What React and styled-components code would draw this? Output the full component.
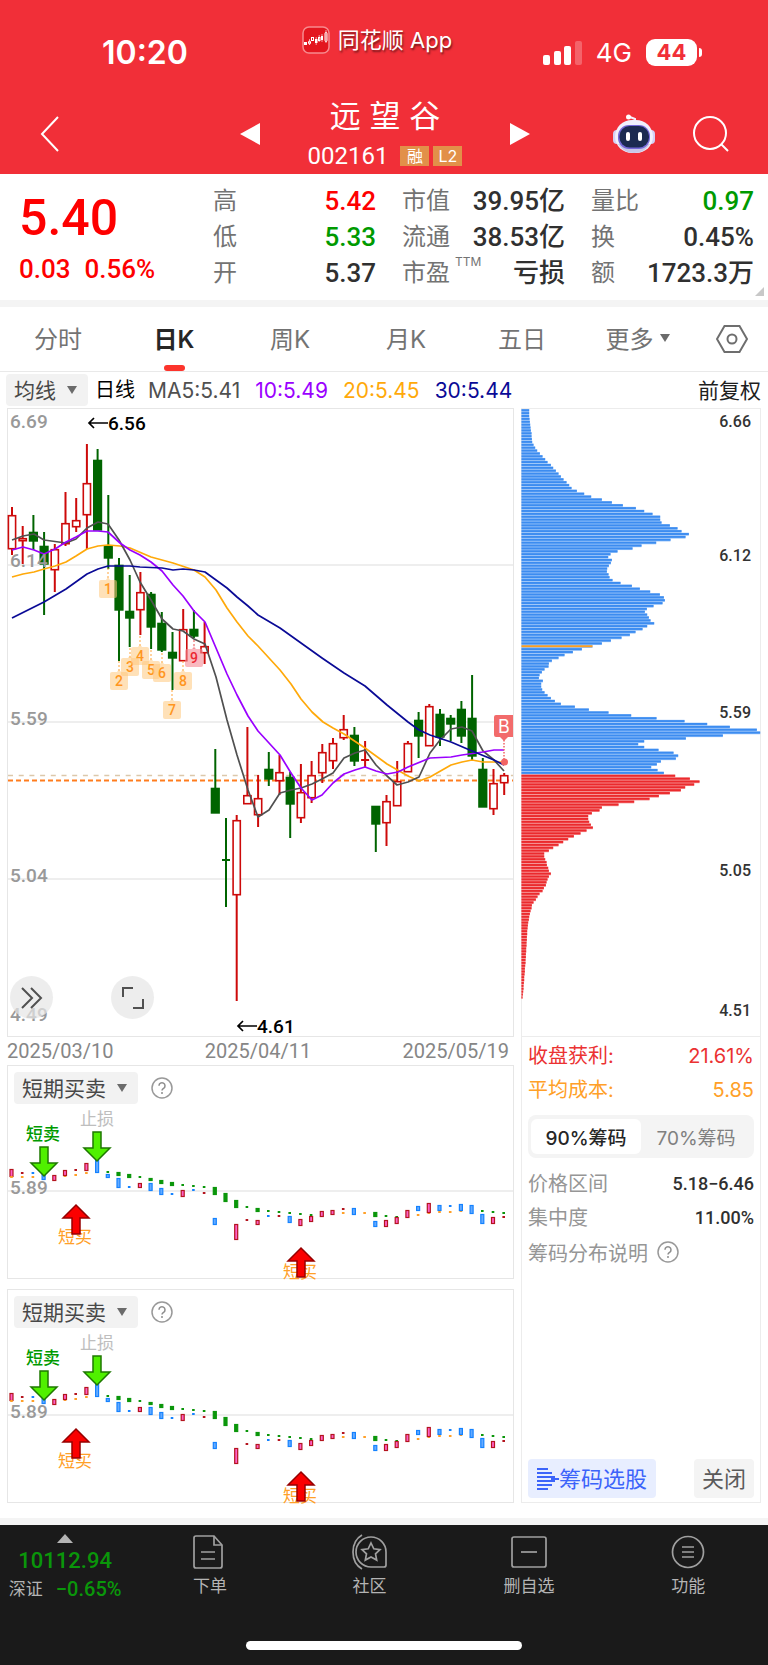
import React from "react";
import styled, { createGlobalStyle } from "styled-components";

const STEP = 10.7;

// kind, high, body top, body bottom, low
const candles = [
	["up", 507, 515, 549, 555],
	["up", 526, 538, 541, 564],
	["down", 515, 532, 541, 550],
	["down", 532, 546, 564, 615],
	["up", 544, 549, 570, 592],
	["up", 492, 523, 544, 546],
	["up", 498, 520, 527, 532],
	["up", 444, 483, 515, 549],
	["down", 449, 460, 530, 530],
	["down", 495, 546, 558, 569],
	["down", 558, 565, 610, 661],
	["down", 575, 611, 618, 647],
	["up", 572, 592, 610, 635],
	["down", 592, 594, 627, 649],
	["down", 612, 623, 650, 652],
	["down", 632, 652, 658, 690],
	["up", 609, 629, 661, 661],
	["down", 610, 629, 636, 638],
	["up", 622, 646, 653, 664],
	["down", 749, 788, 813, 813],
	["down", 818, 860, 861, 907],
	["up", 815, 820, 895, 1001],
	["up", 727, 795, 804, 804],
	["up", 775, 798, 815, 827],
	["down", 752, 769, 779, 786],
	["up", 755, 772, 781, 795],
	["down", 772, 777, 804, 838],
	["up", 764, 792, 818, 823],
	["up", 761, 775, 798, 803],
	["up", 744, 752, 773, 783],
	["up", 738, 743, 761, 769],
	["up", 715, 729, 738, 740],
	["down", 727, 735, 761, 766],
	["up", 741, 760, 761, 767],
	["down", 806, 806, 824, 852],
	["up", 795, 801, 823, 846],
	["up", 761, 781, 806, 806],
	["up", 741, 743, 772, 772],
	["down", 712, 720, 736, 758],
	["up", 704, 706, 746, 746],
	["down", 709, 714, 737, 746],
	["down", 715, 718, 724, 741],
	["down", 701, 709, 736, 743],
	["down", 675, 718, 756, 760],
	["down", 758, 769, 807, 807],
	["up", 769, 783, 809, 815],
	["up", 773, 775, 783, 795],
];

const averages = [
	{
		color: "#ffa90a",
		points:
			"12,577 23,574 34,572 44,569 55,566 66,562 76,556 87,549 98,546 108,545 120,546 130,548 151,557 173,563 194,570 205,577 216,590 227,608 237,622 248,636 258,646 269,658 280,670 291,684 301,699 312,712 323,722 333,728 344,734 365,748 387,764 408,776 419,781 430,777 451,765 462,762 472,760 483,762 504,762",
	},
	{
		color: "#505050",
		points:
			"12,540 23,536 34,534 44,540 66,543 76,539 87,528 98,522 108,524 119,540 130,560 140,582 151,600 162,619 173,629 183,631 194,639 205,644 216,677 227,720 237,755 248,790 258,817 269,810 280,793 291,790 301,788 312,784 322,779 333,773 344,758 355,753 365,750 376,765 387,776 397,785 408,782 419,777 430,753 440,740 451,729 462,727 472,731 483,751 494,760 504,771",
	},
	{
		color: "#9a00ff",
		points:
			"12,550 23,547 34,550 44,554 55,549 66,542 76,537 87,531 98,531 108,532 120,543 130,550 140,555 151,562 162,571 173,585 183,596 194,611 205,622 216,648 227,674 237,695 248,716 258,731 269,743 280,755 291,773 301,788 312,800 322,795 333,783 344,774 355,770 365,767 376,771 387,774 398,772 408,767 430,758 451,757 462,755 483,752 494,750 504,750",
	},
	{
		color: "#0a0a96",
		points:
			"12,618 44,602 66,589 87,574 98,569 108,566 130,566 140,567 162,568 173,570 183,569 194,570 205,572 216,580 227,588 237,597 248,606 258,615 280,628 301,643 322,658 344,673 365,686 387,705 408,722 419,730 430,735 451,742 472,751 494,760 504,765",
	},
];

// number, x, top of the flag, start of the dotted stem
const flags = [
	[1, 108, 580, 568],
	[2, 119, 672, 661],
	[3, 130, 658, 648],
	[4, 140, 647, 636],
	[5, 151, 661, 650],
	[6, 162, 664, 653],
	[7, 172, 701, 690],
	[8, 183, 672, 661],
	[9, 194, 649, 640],
];

const priceLabels = [
	["6.69", 428],
	["6.14", 567],
	["5.59", 725],
	["5.04", 882],
	["4.49", 1021],
];

const chipLabels = [
	["6.66", 427],
	["6.12", 561],
	["5.59", 718],
	["5.05", 876],
	["4.51", 1016],
];

const chips = [
	43, 43, 43, 44, 45, 46, 47, 48, 50, 50, 51, 52, 56, 61, 67, 75, 83, 91, 98,
	108, 115, 123, 131, 138, 146, 155, 163, 170, 186, 208, 229, 261, 291, 324,
	363, 388, 413, 436, 436, 440, 465, 488, 500, 522, 512, 467, 424, 380, 353,
	308, 287, 280, 291, 288, 282, 277, 276, 281, 284, 293, 317, 351, 375, 406,
	435, 447, 450, 443, 416, 396, 390, 397, 402, 407, 418, 397, 383, 362, 345,
	320, 288, 261, 233, 201, 174, 149, 131, 111, 102, 101, 89, 81, 74, 72, 84,
	79, 79, 82, 89, 98, 108, 120, 138, 180, 222, 281, 349, 425, 509, 577, 645,
	726, 736, 624, 513, 388, 370, 388, 431, 476, 490, 483, 438, 426, 409, 428,
	447, 481, 525, 554, 538, 511, 498, 465, 432, 404, 358, 311, 261, 254, 231,
	220, 220, 223, 228, 234, 215, 197, 177, 160, 145, 131, 115, 102, 88, 88, 91,
	95, 96, 100, 102, 108, 102, 98, 95, 93, 87, 83, 74, 68, 63, 56, 51, 50, 47,
	45, 43, 42, 40, 39, 38, 37, 37, 36, 36, 35, 35, 34, 34, 33, 33, 32, 32, 31,
	30, 30, 29, 28, 28, 27, 26, 26, 25, 24, 23,
];
const COST_ROW = 82;
const FIRST_PROFIT_ROW = 127;

// r/b/g are bars, o is the small orange mark; an entry without a bottom is a dot
const signals = [
	[["r", 1169, 1177], ["o", 1177]],
	[["r", 1173], ["o", 1177]],
	[["b", 1173], ["o", 1177]],
	[["b", 1174, 1180]],
	[["r", 1175, 1181]],
	[["o", 1176], ["r", 1170, 1176]],
	[["r", 1170], ["o", 1175]],
	[["r", 1163, 1171], ["o", 1173]],
	[["b", 1160, 1173]],
	[["g", 1172], ["b", 1174, 1178]],
	[["g", 1172, 1176], ["b", 1178, 1188]],
	[["g", 1174, 1178], ["b", 1187]],
	[["g", 1177], ["r", 1183, 1188]],
	[["g", 1178, 1181], ["b", 1183, 1191]],
	[["g", 1180, 1184], ["b", 1188, 1195]],
	[["g", 1182, 1186], ["b", 1194]],
	[["g", 1185], ["r", 1190, 1197]],
	[["g", 1186], ["b", 1190]],
	[["g", 1187], ["r", 1193]],
	[["g", 1187, 1195], ["b", 1218, 1225]],
	[["g", 1193, 1202]],
	[["g", 1200, 1208], ["r", 1224, 1240]],
	[["g", 1207], ["r", 1220]],
	[["g", 1208, 1212], ["r", 1220, 1225]],
	[["g", 1211], ["b", 1216]],
	[["g", 1212], ["r", 1216]],
	[["g", 1213], ["b", 1216, 1223]],
	[["g", 1214], ["r", 1219, 1226]],
	[["g", 1215], ["r", 1216, 1222]],
	[["r", 1211, 1217]],
	[["r", 1210, 1215]],
	[["r", 1209], ["o", 1213]],
	[["b", 1208, 1215]],
	[["o", 1213]],
	[["g", 1212, 1217], ["b", 1221, 1227]],
	[["g", 1216], ["r", 1220, 1227]],
	[["g", 1217], ["r", 1217, 1224]],
	[["r", 1210, 1218]],
	[["b", 1206, 1211], ["o", 1215]],
	[["o", 1213], ["r", 1203, 1213]],
	[["b", 1205, 1211], ["o", 1212]],
	[["b", 1206], ["o", 1212]],
	[["o", 1211], ["b", 1204, 1211]],
	[["b", 1205, 1214]],
	[["g", 1211], ["b", 1214, 1224]],
	[["g", 1212], ["r", 1217, 1224]],
	[["g", 1213], ["r", 1217]],
];

const signalColors = {
	r: ["#b4141e", "#ff5fc8"],
	b: ["#1482ff", "#64aaff"],
	g: ["#0a960a", "#0a960a"],
	o: ["#ffa028", "#ffa028"],
};

const quotes = [
	[
		["高", "5.42", "#fe0000"],
		["低", "5.33", "#009a00"],
		["开", "5.37"],
	],
	[
		["市值", "39.95亿"],
		["流通", "38.53亿"],
		["市盈", "亏损", undefined, "TTM"],
	],
	[
		["量比", "0.97", "#009a00"],
		["换", "0.45%"],
		["额", "1723.3万"],
	],
];

const Caret = () => (
	<svg width="12" height="10" viewBox="0 0 12 10" aria-hidden="true">
		<path d="M1 1h10L6 9z" fill="#6b6b6b" />
	</svg>
);

const HelpIcon = () => (
	<svg width="22" height="22" viewBox="0 0 22 22" fill="none" aria-hidden="true">
		<circle cx="11" cy="11" r="10" stroke="#999" strokeWidth="1.5" />
		<path
			d="M8 8.8a3 3 0 1 1 4.6 2.5c-1.1.7-1.6 1.1-1.6 2.2"
			stroke="#8c8c8c"
			strokeWidth="1.5"
		/>
		<circle cx="11" cy="16" r="1" fill="#8c8c8c" />
	</svg>
);

const StatusBar = () => (
	<Status>
		<Clock>10:20</Clock>
		<AppMark>
			<svg width="28" height="28" viewBox="0 0 28 28" aria-hidden="true">
				<rect x="1" y="1" width="26" height="26" rx="6" fill="#e3161f" stroke="#f78a8e" strokeWidth="1.5" />
				<g fill="#fff">
					<rect x="2" y="16" width="3" height="3" />
					<rect x="13" y="13" width="2.5" height="4" />
					<rect x="19" y="10" width="2" height="4" />
				</g>
				<g fill="none" stroke="#fff">
					<rect x="6.5" y="15" width="2" height="3" rx="1" />
					<rect x="9.5" y="11.5" width="2" height="3" />
					<rect x="16.5" y="11.5" width="1.5" height="3" />
					<rect x="23" y="6.5" width="2" height="9" rx="1" />
					<path d="M7.5 13v6M14.2 11v8M17.2 9v7M20 8v8M24 4v13" strokeWidth=".6" />
				</g>
			</svg>
			同花顺 App
		</AppMark>
		<Signals>
			<svg width="39" height="25" viewBox="0 0 39 25" fill="#fff" aria-hidden="true">
				<rect x="0" y="15" width="7" height="10" rx="2" />
				<rect x="11" y="11" width="7" height="14" rx="2" />
				<rect x="21" y="6" width="7" height="19" rx="2" />
				<rect x="32" y="1" width="7" height="24" rx="2" opacity=".25" />
			</svg>
			<Network>4G</Network>
			<Battery>44</Battery>
		</Signals>
	</Status>
);

const StockHeader = () => (
	<Nav>
		<IconButton aria-label="返回">
			<svg width="20" height="36" viewBox="0 0 20 36" fill="none" stroke="#fff" strokeWidth="2">
				<path d="M18 1L2 18l16 17" />
			</svg>
		</IconButton>
		<Stock>
			<IconButton aria-label="上一只">
				<svg width="20" height="22" viewBox="0 0 20 22" fill="#fff">
					<path d="M20 0v22L0 11z" />
				</svg>
			</IconButton>
			<StockTitle>
				<StockName>远 望 谷</StockName>
				<StockCode>
					002161
					<Tags>
						<Tag>融</Tag>
						<Tag>L2</Tag>
					</Tags>
				</StockCode>
			</StockTitle>
			<IconButton aria-label="下一只">
				<svg width="20" height="22" viewBox="0 0 20 22" fill="#fff">
					<path d="M0 0v22l20-11z" />
				</svg>
			</IconButton>
		</Stock>
		<Tools>
			<IconButton aria-label="智能助手">
				<svg width="44" height="40" viewBox="0 0 44 40">
					<path d="M23 8V5l-5-2" fill="none" stroke="#f4f0ff" strokeWidth="2" />
					<circle cx="16.5" cy="3" r="2.5" fill="#fff" />
					<rect x="1" y="16" width="8" height="14" rx="4" fill="#d4d0f5" />
					<rect x="35" y="16" width="8" height="14" rx="4" fill="#d4d0f5" />
					<rect x="3" y="6" width="38" height="33" rx="17" fill="#f1f0fc" />
					<path d="M6 30c4 6 9 9 16 9s12-3 16-9z" fill="#c9c7e8" />
					<rect x="6" y="11" width="32" height="24" rx="11" fill="#7568d8" />
					<rect x="7.5" y="12" width="29.5" height="21.5" rx="10" fill="#1c2a50" />
					<rect x="14" y="18" width="4" height="9" rx="2" fill="#fff" />
					<rect x="26" y="18" width="4" height="9" rx="2" fill="#fff" />
				</svg>
			</IconButton>
			<IconButton aria-label="搜索">
				<svg width="38" height="38" viewBox="0 0 38 38" fill="none" stroke="#fff" strokeWidth="2">
					<circle cx="18" cy="18" r="16" />
					<path d="M29 29l7 7" />
				</svg>
			</IconButton>
		</Tools>
	</Nav>
);

const QuotePanel = () => (
	<Quote>
		<Latest>
			<LastPrice>5.40</LastPrice>
			<Change>
				<span>0.03</span>
				<span>0.56%</span>
			</Change>
		</Latest>
		{quotes.map((rows) => (
			<QuoteList key={rows[0][0]}>
				{rows.map(([label, value, color, note]) => (
					<QuoteRow key={label}>
						<QuoteLabel>
							{label}
							{note && <sup>{note}</sup>}
						</QuoteLabel>
						<QuoteValue $color={color}>{value}</QuoteValue>
					</QuoteRow>
				))}
			</QuoteList>
		))}
		<Corner />
	</Quote>
);

const Candle = ({ index, data }) => {
	const [kind, high, top, bottom, low] = data;
	const x = 12 + index * STEP;
	const color = kind === "up" ? "#cd0a0a" : "#006400";

	if (bottom - top < 2) {
		return (
			<path
				d={`M${x} ${high}V${low}M${x - 4} ${top}h8`}
				stroke={color}
				strokeWidth="2"
			/>
		);
	}
	return (
		<g stroke={color} strokeWidth="2">
			<path d={`M${x} ${high}V${top}M${x} ${bottom}V${low}`} />
			<rect
				x={x - 3.6}
				y={top + 0.7}
				width="7.2"
				height={bottom - top - 1}
				fill={kind === "up" ? "#fff" : color}
				strokeWidth={kind === "up" ? 1.6 : 2}
			/>
		</g>
	);
};

const KLineChart = () => (
	<Drawing viewBox="8 409 505 627" role="img" aria-label="日K线图">
		<path d="M8 565h505M8 722h505M8 879h505" stroke="#e9e9e9" strokeWidth="1.5" />
		<path d="M8 775.5h505" stroke="#dcc8aa" strokeWidth="1.5" strokeDasharray="5 5.7" />
		<path d="M8 780.5h505" stroke="#ff7d1e" strokeWidth="2" strokeDasharray="5 3" />
		{candles.map((c, i) => (
			<Candle key={i} index={i} data={c} />
		))}
		{averages.map((line) => (
			<polyline
				key={line.color}
				points={line.points}
				fill="none"
				stroke={line.color}
				strokeWidth="1.7"
				strokeLinejoin="round"
			/>
		))}
		{flags.map(([n, x, y, from]) => {
			const hot = n === 9;
			return (
				<g key={n}>
					<path d={`M${x} ${from}V${y}`} stroke={hot ? "#e64646" : "#ffa53c"} strokeDasharray="2 2" />
					<path
						d={`M${x - 7} ${y}h5l2-3 2 3h5q2 0 2 2v14q0 2-2 2h-14q-2 0-2-2v-14q0-2 2-2z`}
						fill={hot ? "#f58a94" : "#ffc87d"}
						opacity={hot ? 0.6 : 0.55}
					/>
					<FlagText x={x} y={y + 14} $hot={hot}>
						{n}
					</FlagText>
				</g>
			);
		})}
		<path d="M504 740v20" stroke="#f26464" strokeWidth="1.5" strokeDasharray="1.5 1.5" />
		<circle cx="504.5" cy="762" r="3.5" fill="#f26464" />
		<path d="M496 715h17v22h-5l-4 4-4-4h-4q-2 0-2-2v-18q0-2 2-2z" fill="#f26b6b" />
		<BuyText x="504" y="733">B</BuyText>
		{priceLabels.map(([text, y]) => (
			<AxisText key={text} x="10" y={y}>
				{text}
			</AxisText>
		))}
		<g fill="none" stroke="#000" strokeWidth="1.7">
			<path d="M108 423H89M94 418l-5 5 5 5" />
			<path d="M257 1026h-19M243 1021l-5 5 5 5" />
		</g>
		<ExtremeText x="108" y="430">6.56</ExtremeText>
		<ExtremeText x="257" y="1033">4.61</ExtremeText>
	</Drawing>
);

const ChipChart = () => (
	<Drawing viewBox="522 409 238 627" role="img" aria-label="筹码分布">
		{chips.map((v, i) => {
			const y = 409 + i * 2.878;
			const profit = i >= FIRST_PROFIT_ROW;
			const width = (v - 20) / 3;
			let color = profit ? "#eb2a2d" : "#3c8cf0";
			if (i === COST_ROW) color = "#ff9f1e";
			return (
				<g key={i}>
					<rect x="521.5" y={y} width={width} height="2.9" fill={profit ? "#f48284" : "#8cbcf8"} />
					<rect x="521.5" y={y + 0.3} width={width} height="1.9" fill={color} />
				</g>
			);
		})}
		{chipLabels.map(([text, y]) => (
			<ChipText key={text} x="751" y={y}>
				{text}
			</ChipText>
		))}
	</Drawing>
);

const Arrow = ({ x, y, up }) => (
	<path
		d={
			up
				? `M${x} ${y}l13 13h-9v16h-8v-16h-9z`
				: `M${x} ${y + 29}l13-13h-9v-16h-8v16h-9z`
		}
		fill={up ? "#fa0000" : "#50f000"}
		stroke={up ? "#960000" : "#1e7800"}
		strokeWidth="1.5"
	/>
);

const SignalPanel = ({ id }) => (
	<Panel>
		<SignalBar>
			<Picker>
				<select id={id} aria-label="指标">
					<option>短期买卖</option>
				</select>
				<Caret />
			</Picker>
			<IconButton aria-label="指标说明">
				<HelpIcon />
			</IconButton>
		</SignalBar>
		<Drawing viewBox="8 1104 505 174" role="img" aria-label="短期买卖信号">
			<path d="M8 1191h505" stroke="#e9e9e9" strokeWidth="1.5" />
			{signals.map((marks, i) =>
				marks.map(([kind, top, bottom]) => {
					const x = 11.5 + i * STEP;
					const [edge, fill] = signalColors[kind];
					if (!bottom) {
						return <rect key={kind} x={x - 1.3} y={top - 1} width="2.6" height="2" fill={edge} />;
					}
					return (
						<rect
							key={kind}
							x={x - 1.5}
							y={top + 0.5}
							width="3"
							height={bottom - top - 1}
							fill={fill}
							stroke={edge}
							strokeWidth="1.2"
						/>
					);
				})
			)}
			<AxisText x="10" y="1194">5.89</AxisText>
			<SignalText x="43" y="1140" $color="#009a00" $bold>短卖</SignalText>
			<SignalText x="97" y="1125" $color="#bebebe">止损</SignalText>
			<SignalText x="75" y="1243" $color="#ffa028">短买</SignalText>
			<SignalText x="300" y="1278" $color="#ffa028">短买</SignalText>
			<Arrow x={44} y={1147} />
			<Arrow x={97} y={1132} />
			<Arrow x={76} y={1205} up />
			<Arrow x={301} y={1248} up />
		</Drawing>
	</Panel>
);

const ChipPanel = () => (
	<SidePanel>
		<ChipArea>
			<ChipChart />
		</ChipArea>
		<Facts>
			<Fact $color="#eb3232">
				收盘获利:<span>21.61%</span>
			</Fact>
			<Fact $color="#ffa028">
				平均成本:<span>5.85</span>
			</Fact>
		</Facts>
		<Segment>
			<SegmentButton $active aria-pressed="true">90%筹码</SegmentButton>
			<SegmentButton aria-pressed="false">70%筹码</SegmentButton>
		</Segment>
		<Facts>
			<Fact>
				价格区间<b>5.18−6.46</b>
			</Fact>
			<Fact>
				集中度<b>11.00%</b>
			</Fact>
			<Explain>
				筹码分布说明
				<HelpIcon />
			</Explain>
		</Facts>
		<SideFooter>
			<PickButton>
				<svg width="22" height="22" viewBox="0 0 22 22" stroke="#3c64fa" strokeWidth="2" aria-hidden="true">
					<path d="M0 1h11M0 5h15M0 9h18M0 13h18M0 17h15M0 21h11M14 11h8" />
				</svg>
				筹码选股
			</PickButton>
			<CloseButton>关闭</CloseButton>
		</SideFooter>
	</SidePanel>
);

const menu = [
	{
		label: "下单",
		icon: (
			<>
				<path d="M4 2h18l8 9v21q0 2-2 2H4q-2 0-2-2V4q0-2 2-2z" />
				<path d="M22 2v9h8M9 18h14M9 25h14" />
			</>
		),
	},
	{
		label: "社区",
		icon: (
			<>
				<path d="M20 3a15 15 0 1 0 0 30h13a2 2 0 0 0 2-2V18A15 15 0 0 0 20 3z" />
				<path d="M11 1C-1 8-1 28 11 35" />
				<path d="M20 9l2.8 5.8 6.2.8-4.5 4.3 1.2 6.2L20 23l-5.7 3.1 1.2-6.2-4.5-4.3 6.2-.8z" />
			</>
		),
	},
	{
		label: "删自选",
		icon: (
			<>
				<rect x="1" y="3" width="34" height="30" rx="2" />
				<path d="M10 18h16" />
			</>
		),
	},
	{
		label: "功能",
		icon: (
			<>
				<circle cx="18" cy="18" r="15.5" />
				<path d="M12 13h12M12 18h12M12 23h12" />
			</>
		),
	},
];

const App = () => {
	return (
		<Page>
			<GlobalStyle />
			<Header>
				<StatusBar />
				<StockHeader />
			</Header>
			<QuotePanel />
			<Divider />
			<Tabs>
				<Tab>分时</Tab>
				<Tab $active>日K</Tab>
				<Tab>周K</Tab>
				<Tab>月K</Tab>
				<Tab>五日</Tab>
				<Tab>
					更多 <Caret />
				</Tab>
				<SettingsButton aria-label="设置">
					<svg width="32" height="28" viewBox="0 0 32 28" fill="none" stroke="#6e6e6e" strokeWidth="2">
						<path d="M8.5 1h15L31 14l-7.5 13h-15L1 14z" />
						<circle cx="16" cy="14" r="4.5" />
					</svg>
				</SettingsButton>
			</Tabs>
			<Legend>
				<Picker>
					<select id="overlay" aria-label="主图指标">
						<option>均线</option>
					</select>
					<Caret />
				</Picker>
				<Period>日线</Period>
				<Averages>
					<LegendItem $color="#505050">MA5:5.41</LegendItem>
					<LegendItem $color="#9a00ff">10:5.49</LegendItem>
					<LegendItem $color="#ffa90a">20:5.45</LegendItem>
					<LegendItem $color="#0a0a96">30:5.44</LegendItem>
				</Averages>
				<Restore>前复权</Restore>
			</Legend>
			<Board>
				<MainColumn>
					<Panel>
						<KLineChart />
						<RoundButton $left="2%" aria-label="展开">
							<svg width="22" height="22" viewBox="0 0 22 22" fill="none" stroke="#505050" strokeWidth="2">
								<path d="M1 1l10 10L1 21M10 1l10 10-10 10" />
							</svg>
						</RoundButton>
						<RoundButton $left="22%" aria-label="全屏">
							<svg width="24" height="24" viewBox="0 0 24 24" fill="none" stroke="#505050" strokeWidth="2">
								<path d="M2 11V2h10M22 13v9H12" />
							</svg>
						</RoundButton>
					</Panel>
					<Dates>
						<span>2025/03/10</span>
						<span>2025/04/11</span>
						<span>2025/05/19</span>
					</Dates>
					<SignalStack>
						<SignalPanel id="signal-1" />
						<SignalPanel id="signal-2" />
					</SignalStack>
				</MainColumn>
				<ChipPanel />
			</Board>
			<Divider />
			<Footer>
				<Menu>
					<Index>
						<svg width="16" height="9" viewBox="0 0 16 9" fill="#b4b4b4" aria-hidden="true">
							<path d="M8 0l8 9H0z" />
						</svg>
						<IndexValue>10112.94</IndexValue>
						<IndexRow>
							深证 <IndexChange>−0.65%</IndexChange>
						</IndexRow>
					</Index>
					{menu.map((item) => (
						<MenuItem key={item.label} href="#">
							<svg width="36" height="36" viewBox="0 0 36 36" fill="none" stroke="#a0a0a0" strokeWidth="1.7">
								{item.icon}
							</svg>
							{item.label}
						</MenuItem>
					))}
				</Menu>
				<HomeBar />
			</Footer>
		</Page>
	);
};

export default App;

const GlobalStyle = createGlobalStyle`
	* {
		box-sizing: border-box;
	}
	body {
		margin: 0;
		background: #fff;
		font-family: Inter, "Noto Sans CJK SC", sans-serif;
		color: #333;
	}
	button, select {
		font: inherit;
		color: inherit;
		border: none;
		padding: 0;
		margin: 0;
		background: none;
		cursor: pointer;
	}
	svg {
		display: block;
		flex: none;
	}
`;

const Page = styled.div`
	display: flex;
	flex-direction: column;
`;

const Header = styled.header`
	background: #f12f38;
	color: #fff;
`;

const Status = styled.div`
	display: grid;
	grid-template-columns: 1fr auto 1fr;
	padding: 26px 66px 0 52px;
	height: 84px;
`;

const Clock = styled.div`
	margin: 7px 0 0 50px;
	font-size: 32px;
	line-height: 40px;
	font-weight: 600;
`;

const AppMark = styled.div`
	display: flex;
	gap: 8px;
	font-size: 22px;
	line-height: 28px;
	text-shadow: 1px 2px 2px rgba(0, 0, 0, 0.5);
`;

const Signals = styled.div`
	display: flex;
	justify-content: flex-end;
	align-items: center;
	gap: 14px;
	height: 52px;
`;

const Network = styled.span`
	font-size: 26px;
`;

const Battery = styled.span`
	position: relative;
	width: 51px;
	border-radius: 9px;
	background: #fff;
	color: #f12f38;
	font-size: 22px;
	line-height: 27px;
	font-weight: 700;
	text-align: center;
	margin-right: 5px;

	&::after {
		content: "";
		position: absolute;
		right: -5px;
		top: 9px;
		width: 3px;
		height: 9px;
		border-radius: 0 3px 3px 0;
		background: #fff;
	}
`;

const Nav = styled.nav`
	display: grid;
	grid-template-columns: 1fr auto 1fr;
	align-items: center;
	height: 90px;
	padding: 10px 38px 0 40px;
`;

const IconButton = styled.button`
	display: flex;
	align-items: center;
	justify-self: start;
`;

const Stock = styled.div`
	display: flex;
	align-items: center;
	gap: 48px;
`;

const StockTitle = styled.div`
	display: flex;
	flex-direction: column;
	align-items: center;
`;

const StockName = styled.h1`
	margin: 0;
	font-size: 31px;
	line-height: 40px;
	padding-bottom: 4px;
	font-weight: 400;
`;

const StockCode = styled.div`
	display: flex;
	align-items: center;
	gap: 12px;
	font-family: Roboto, sans-serif;
	font-size: 24px;
	line-height: 32px;
`;

const Tags = styled.span`
	display: flex;
	gap: 4px;
`;

const Tag = styled.span`
	width: 29px;
	background: #e29049;
	font-family: Inter, "Noto Sans CJK SC", sans-serif;
	font-size: 16px;
	line-height: 20px;
	text-align: center;
`;

const Tools = styled.div`
	display: flex;
	justify-content: flex-end;
	align-items: center;
	gap: 36px;
`;

const Quote = styled.section`
	position: relative;
	display: grid;
	grid-template-columns: 168fr 163fr 163fr 163fr;
	gap: 26px;
	padding: 9px 14px 9px 19px;
`;

const Latest = styled.div`
	color: #fe0000;
	font-family: Roboto, sans-serif;
	font-weight: 500;
	white-space: nowrap;
`;

const LastPrice = styled.div`
	font-size: 50px;
	line-height: 70px;
`;

const Change = styled.div`
	display: flex;
	gap: 14px;
	font-size: 26px;
	line-height: 32px;
`;

const QuoteList = styled.dl`
	margin: 0;
`;

const QuoteRow = styled.div`
	display: flex;
	justify-content: space-between;
	height: 36px;
	line-height: 36px;
	white-space: nowrap;
`;

const QuoteLabel = styled.dt`
	display: flex;
	font-size: 24px;
	color: #737373;

	sup {
		margin-left: 5px;
		font-size: 12px;
		line-height: 14px;
	}
`;

const QuoteValue = styled.dd`
	margin: 0;
	font-family: Roboto, "Noto Sans CJK SC", sans-serif;
	font-size: 26px;
	font-weight: 500;
	color: ${({ $color }) => $color || "#303030"};
`;

const Corner = styled.span`
	position: absolute;
	right: 4px;
	bottom: 4px;
	border-left: 9px solid transparent;
	border-bottom: 9px solid #c8c8c8;
`;

const Divider = styled.div`
	height: 7px;
	background: #f4f4f4;
`;

const Tabs = styled.div`
	display: flex;
	height: 65px;
	border-bottom: 1px solid #e9e9e9;
`;

const Tab = styled.button`
	position: relative;
	display: flex;
	flex: 116;
	justify-content: center;
	align-items: center;
	gap: 5px;
	padding-bottom: 3px;
	font-size: 24px;
	font-weight: ${({ $active }) => ($active ? 600 : 400)};
	color: ${({ $active }) => ($active ? "#262626" : "#737373")};

	&::after {
		content: "";
		display: ${({ $active }) => ($active ? "block" : "none")};
		position: absolute;
		bottom: 0;
		width: 21px;
		height: 6px;
		border-radius: 3px;
		background: #fc342c;
	}
`;

const SettingsButton = styled.button`
	display: flex;
	flex: 72;
	justify-content: center;
	align-items: center;
`;

const Legend = styled.div`
	display: flex;
	align-items: center;
	gap: 7px;
	height: 36px;
	padding: 0 7px 0 6px;
	font-size: 21px;
	white-space: nowrap;
`;

const Picker = styled.span`
	display: flex;
	align-items: center;
	gap: 10px;
	height: 32px;
	padding: 0 10px 0 8px;
	border-radius: 4px;
	background: #f2f2f2;
	color: #484848;

	select {
		appearance: none;
	}
`;

const Period = styled.span`
	padding-bottom: 3px;
	font-size: 20px;
	color: #000;
`;

const LegendItem = styled.span`
	color: ${({ $color }) => $color};
`;

const Averages = styled.span`
	display: flex;
	gap: 15px;
	margin-left: 6px;
`;

const Restore = styled.button`
	margin-left: auto;
	padding-bottom: 3px;
	color: #1e1e1e;
`;

const Board = styled.main`
	display: grid;
	grid-template-columns: 507fr 240fr;
	gap: 7px;
	padding: 0 7px 15px;
`;

const MainColumn = styled.div`
	min-width: 0;
`;

const Panel = styled.section`
	position: relative;
	border: 1px solid #e6e6e6;
`;

const Drawing = styled.svg`
	width: 100%;
	height: auto;
	overflow: visible;
`;

const AxisText = styled.text`
	font-family: Roboto, sans-serif;
	font-size: 19px;
	font-weight: 500;
	fill: #999;
`;

const ExtremeText = styled(AxisText)`
	fill: #000;
`;

const ChipText = styled(AxisText)`
	font-size: 16px;
	text-anchor: end;
	fill: #333;
`;

const FlagText = styled.text`
	font-family: Roboto, sans-serif;
	font-size: 14px;
	font-weight: 500;
	text-anchor: middle;
	fill: ${({ $hot }) => ($hot ? "#eb2832" : "#ff961e")};
`;

const BuyText = styled.text`
	font-family: Inter, sans-serif;
	font-size: 18px;
	text-anchor: middle;
	fill: #fff;
`;

const SignalText = styled.text`
	font-family: "Noto Sans CJK SC", sans-serif;
	font-size: 17px;
	font-weight: ${({ $bold }) => ($bold ? 500 : 400)};
	text-anchor: middle;
	fill: ${({ $color }) => $color};
`;

const RoundButton = styled.button`
	position: absolute;
	left: ${({ $left }) => $left};
	bottom: 17px;
	display: flex;
	justify-content: center;
	align-items: center;
	width: 43px;
	height: 43px;
	margin-left: -8px;
	border-radius: 50%;
	background: rgba(229, 229, 229, 0.7);
`;

const Dates = styled.div`
	display: flex;
	justify-content: space-between;
	height: 28px;
	padding-right: 5px;
	font-family: Roboto, sans-serif;
	font-size: 20px;
	line-height: 28px;
	color: #868686;
`;

const SignalStack = styled.div`
	display: flex;
	flex-direction: column;
	gap: 10px;
`;

const SignalBar = styled.div`
	display: flex;
	align-items: center;
	gap: 13px;
	padding: 6px 6px 0;
	font-size: 21px;
`;

const SidePanel = styled.aside`
	display: flex;
	flex-direction: column;
	min-width: 0;
	border: 1px solid #ececec;
	font-size: 20px;
`;

const ChipArea = styled.div`
	border-bottom: 1px solid #ececec;
`;

const Facts = styled.div`
	padding: 2px 6px 0;
`;

const Fact = styled.div`
	display: flex;
	justify-content: space-between;
	line-height: 34px;
	color: ${({ $color }) => $color || "#969696"};

	b {
		font-family: Roboto, sans-serif;
		font-size: 18px;
		font-weight: 500;
		color: #303030;
	}
`;

const Explain = styled.button`
	display: flex;
	align-items: center;
	gap: 9px;
	height: 34px;
	color: #969696;
`;

const Segment = styled.div`
	display: flex;
	height: 43px;
	margin: 8px 6px 7px;
	padding: 4px 3px;
	border-radius: 8px;
	background: #f4f4f4;
`;

const SegmentButton = styled.button`
	flex: 1;
	border-radius: 6px;
	background: ${({ $active }) => ($active ? "#fff" : "transparent")};
	font-size: 19px;
	font-weight: ${({ $active }) => ($active ? 500 : 400)};
	color: ${({ $active }) => ($active ? "#262626" : "#808080")};
`;

const SideFooter = styled.div`
	display: flex;
	justify-content: space-between;
	margin-top: auto;
	padding: 0 6px 4px;
`;

const PickButton = styled.button`
	display: flex;
	align-items: center;
	height: 39px;
	padding: 0 9px;
	border-radius: 4px;
	background: #e8eeff;
	font-size: 22px;
	line-height: 36px;
	color: #3c64fa;
`;

const CloseButton = styled.button`
	height: 39px;
	padding: 0 8px;
	border-radius: 4px;
	background: #f4f4f4;
	font-size: 22px;
	line-height: 36px;
	color: #5a5a5a;
`;

const Footer = styled.footer`
	background: #1a1a1a;
	color: #b4b4b4;
	padding-bottom: 15px;
`;

const Menu = styled.div`
	display: flex;
	height: 116px;
	padding-top: 9px;
`;

const Index = styled.div`
	display: flex;
	flex: 130;
	flex-direction: column;
	align-items: center;
	font-size: 17px;
	white-space: nowrap;
`;

const IndexValue = styled.span`
	font-family: Roboto, sans-serif;
	font-size: 22px;
	line-height: 36px;
	font-weight: 500;
	color: #0a960a;
`;

const IndexRow = styled.span`
	display: flex;
	align-items: center;
	gap: 13px;
	line-height: 20px;
`;

const IndexChange = styled.span`
	font-family: Roboto, sans-serif;
	font-size: 20px;
	font-weight: 500;
	color: #0a960a;
`;

const MenuItem = styled.a`
	display: flex;
	flex: 159;
	flex-direction: column;
	align-items: center;
	gap: 4px;
	font-size: 17px;
	line-height: 24px;
	color: inherit;
	text-decoration: none;
`;

const HomeBar = styled.div`
	width: 36%;
	height: 9px;
	margin: 0 auto;
	border-radius: 5px;
	background: #fff;
`;
